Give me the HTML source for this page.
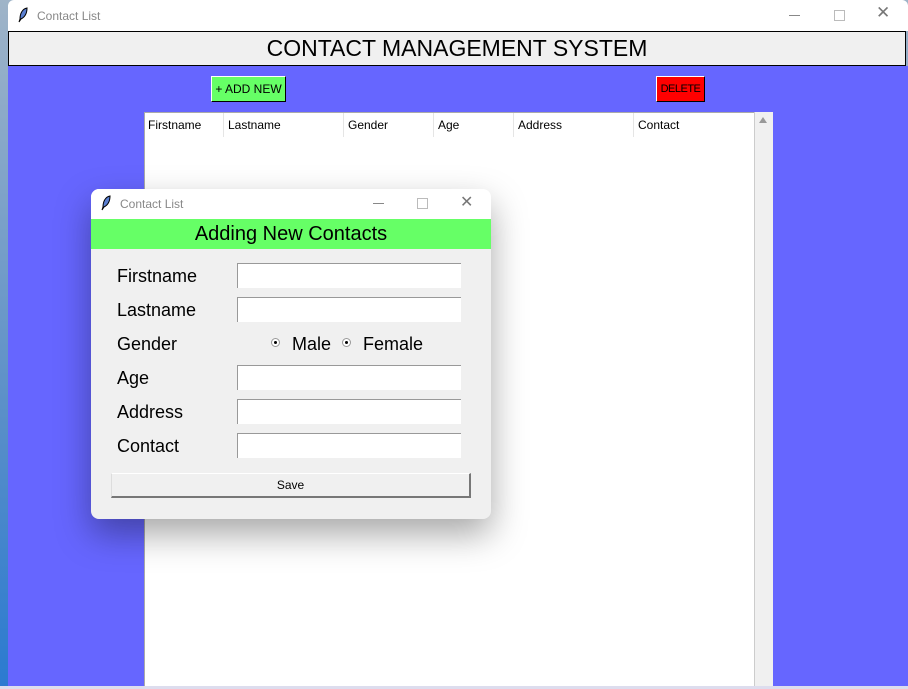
<!DOCTYPE html>
<html><head><style>
body{margin:0;width:908px;height:689px;overflow:hidden;background:linear-gradient(#9fb4c8,#5a8fc8 60%,#2a7ad0);position:relative;font-family:"Liberation Sans",sans-serif}
.a{position:absolute}
.t{font-size:12px;color:#888}
.e{position:absolute;left:237px;width:224px;height:25px;background:#fff;border-top:1px solid #999;border-left:1px solid #999;box-sizing:border-box}
.l{position:absolute;left:117px;font-size:18px;color:#000}
.th{position:absolute;top:118px;font-size:12px;color:#000}
.sep{position:absolute;top:113px;width:1px;height:24px;background:#e5e5e5}
</style></head><body>
<div class="a" style="left:8px;top:0;width:900px;height:31px;background:#fff;border-radius:6px 6px 0 0"></div>
<svg class="a" style="left:18px;top:7px" width="10" height="16" viewBox="0 0 10 16"><path d="M9 1 C4 2 2 7 2 12 L1 15 L3 12 C7 10 9 6 9 1Z" fill="#5a7fd0" stroke="#000" stroke-width="1"/></svg>
<div class="a t" style="left:37px;top:9px">Contact List</div>
<div class="a" style="left:789px;top:15px;width:11px;height:1px;background:#888"></div>
<div class="a" style="left:834px;top:10px;width:9px;height:9px;border:1px solid #bbb"></div>
<div class="a" style="left:876px;top:3px;font-size:17px;color:#777">✕</div>
<div class="a" style="left:8px;top:31px;width:898px;height:35px;background:#f0f0f0;border:1px solid #000;box-sizing:border-box;text-align:center;font-size:23px;line-height:33px">CONTACT MANAGEMENT SYSTEM</div>
<div class="a" style="left:8px;top:66px;width:900px;height:620px;background:#6666ff"></div>
<div class="a" style="left:211px;top:76px;width:75px;height:26px;background:#66ff66;border:1px solid #000;border-top-color:#fff;border-left-color:#fff;box-sizing:border-box;font-size:12px;text-align:center;line-height:24px">+ ADD NEW</div>
<div class="a" style="left:656px;top:76px;width:49px;height:26px;background:#f00;border:1px solid #000;border-top-color:#fff;border-left-color:#fff;box-sizing:border-box;font-size:11px;text-align:center;line-height:24px;letter-spacing:-0.5px">DELETE</div>
<div class="a" style="left:144px;top:112px;width:610px;height:574px;background:#fff;border-top:1px solid #aaa;border-left:1px solid #aaa;box-sizing:border-box"></div>
<div class="a" style="left:754px;top:112px;width:18px;height:574px;background:#f0f0f0;border-left:1px solid #ccc"></div>
<div class="a" style="left:759px;top:117px;width:0;height:0;border:4px solid transparent;border-bottom:6px solid #999;border-top:0"></div>
<div class="th" style="left:148px">Firstname</div><div class="sep" style="left:223px"></div>
<div class="th" style="left:228px">Lastname</div><div class="sep" style="left:343px"></div>
<div class="th" style="left:348px">Gender</div><div class="sep" style="left:433px"></div>
<div class="th" style="left:438px">Age</div><div class="sep" style="left:513px"></div>
<div class="th" style="left:518px">Address</div><div class="sep" style="left:633px"></div>
<div class="th" style="left:638px">Contact</div>
<div class="a" style="left:0;top:686px;width:908px;height:3px;background:#dde"></div>
<div class="a" style="left:91px;top:189px;width:400px;height:330px;background:#f0f0f0;border-radius:8px;box-shadow:0 15px 35px rgba(0,0,0,.35);overflow:hidden">
<div class="a" style="left:0;top:0;width:400px;height:30px;background:#fff"></div>
<svg class="a" style="left:10px;top:6px" width="10" height="16" viewBox="0 0 10 16"><path d="M9 1 C4 2 2 7 2 12 L1 15 L3 12 C7 10 9 6 9 1Z" fill="#5a7fd0" stroke="#000" stroke-width="1"/></svg>
<div class="a t" style="left:29px;top:8px">Contact List</div>
<div class="a" style="left:282px;top:14px;width:11px;height:1px;background:#888"></div>
<div class="a" style="left:326px;top:9px;width:9px;height:9px;border:1px solid #bbb"></div>
<div class="a" style="left:369px;top:3px;font-size:16px;color:#777">✕</div>
<div class="a" style="left:0;top:30px;width:400px;height:30px;background:#66ff66;text-align:center;font-size:20px;line-height:30px">Adding New Contacts</div>
</div>
<div class="l" style="top:266px">Firstname</div><div class="e" style="top:263px"></div>
<div class="l" style="top:300px">Lastname</div><div class="e" style="top:297px"></div>
<div class="l" style="top:334px">Gender</div>
<div class="a" style="left:271px;top:338px;width:9px;height:9px;border-radius:50%;background:#fff;border:1px solid #999;box-sizing:border-box"><div style="margin:2px;width:3px;height:3px;background:#000;border-radius:50%"></div></div>
<div class="l" style="left:292px;top:334px">Male</div>
<div class="a" style="left:342px;top:338px;width:9px;height:9px;border-radius:50%;background:#fff;border:1px solid #999;box-sizing:border-box"><div style="margin:2px;width:3px;height:3px;background:#000;border-radius:50%"></div></div>
<div class="l" style="left:363px;top:334px">Female</div>
<div class="l" style="top:368px">Age</div><div class="e" style="top:365px"></div>
<div class="l" style="top:402px">Address</div><div class="e" style="top:399px"></div>
<div class="l" style="top:436px">Contact</div><div class="e" style="top:433px"></div>
<div class="a" style="left:111px;top:473px;width:360px;height:25px;background:#f0f0f0;border:1px solid #777;border-top-color:#fff;border-left-color:#ddd;border-width:1px 2px 2px 1px;box-sizing:border-box;font-size:12px;text-align:center;line-height:22px">Save</div>
</body></html>
